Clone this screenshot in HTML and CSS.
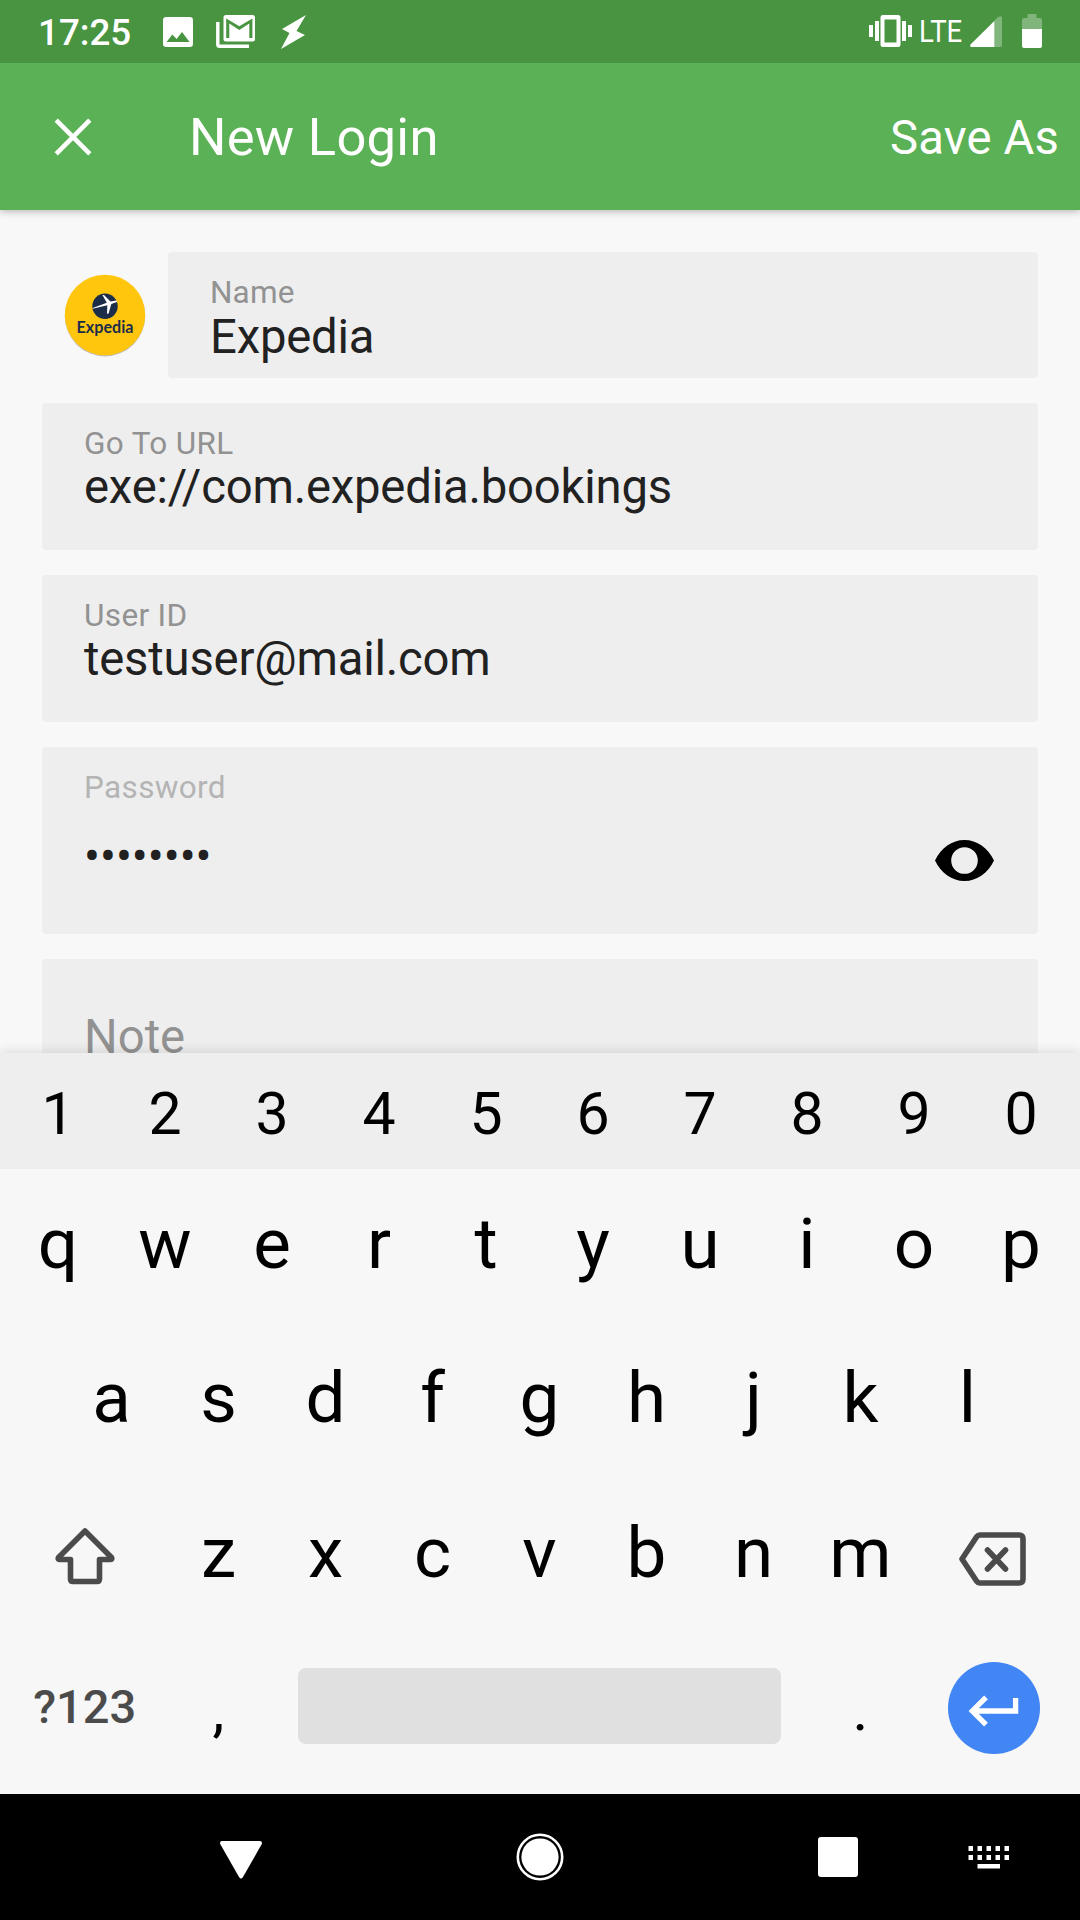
FILE: index.html
```html
<!DOCTYPE html>
<html lang="en">
<head>
<meta charset="utf-8">
<title>New Login</title>
<link rel="stylesheet" href="styles.css">
</head>
<body>
<div class="screen">
  <header class="status">
    <span class="clock">17:25</span>
    <svg class="photo" width="30" height="30" viewBox="0 0 30 30"><path fill="#fff" fill-rule="evenodd" d="M3.300 0H26.700Q30 0 30 3.300V26.700Q30 30 26.700 30H3.300Q0 30 0 26.700V3.300Q0 0 3.300 0ZM9.300 17.500 3.600 25H26.600L19 15 13.600 22Z"/></svg>
    <svg class="gmail" width="39" height="33" viewBox="0 0 39 33"><path fill="#fff" fill-rule="evenodd" d="M10 0H36.500Q39 0 39 2.500V24Q39 26.500 36.500 26.500H10Q7.500 26.500 7.500 24V2.500Q7.500 0 10 0ZM10.200 3.500V23H13.300V8.500L23.300 15 33.300 8.500V23H36.400V3.500L23.300 11.300Z"/><path fill="none" stroke="#fff" stroke-width="3.400" d="M1.800 7V29.500Q1.800 31.300 3.600 31.300H33"/></svg>
    <svg class="bolt" width="25" height="34" viewBox="0 0 25 34"><path fill="#fff" d="M25 0 1 14 8.500 18 0 34 24 20 15.500 16Z"/></svg>
    <svg class="vibrate" width="43" height="32" viewBox="0 0 43 32"><g fill="#fff"><path d="M0 10H4V22H0ZM6 6H10V26H6ZM33 6H37V26H33ZM39 10H43V22H39Z"/><path fill-rule="evenodd" d="M14 0H29Q31.500 0 31.500 2.500V29.500Q31.500 32 29 32H14Q11.500 32 11.500 29.500V2.500Q11.500 0 14 0ZM15.500 4.500V27.500H27.500V4.500Z"/></g></svg>
    <span class="lte"><span class="lte-text">LTE</span></span>
    <svg class="signal" width="32" height="31" viewBox="0 0 32 31"><path fill="#80b57b" d="M24 5 28 1Q32-1 32 2V29Q32 31 30 31H24Z"/><path fill="#fff" d="M24.300 5V31H1.500Q-.500 31 .5 28.500Z"/></svg>
    <svg class="battery" width="20" height="34" viewBox="0 0 20 34"><path fill="#80b57b" d="M5.500 0H14.500V4H18Q20 4 20 6V15H0V6Q0 4 2 4H5.500Z"/><path fill="#fff" d="M0 15H20V32Q20 34 18 34H2Q0 34 0 32Z"/></svg>
  </header>
  <div class="appbar">
    <svg class="close" width="38" height="38" viewBox="0 0 38 38"><path fill="none" stroke="#fff" stroke-width="4.600" d="M2.200 2.200 35.800 35.800M35.800 2.200 2.200 35.800"/></svg>
    <h1 class="title">New Login</h1>
    <span class="save">Save As</span>
  </div>
  <main class="form">
    <div class="name-row">
      <svg class="logo" width="84" height="84" viewBox="0 0 84 84">
        <circle cx="42" cy="43.200" r="40.200" fill="#c3c0b6"/>
        <circle cx="42" cy="42" r="40.200" fill="#ffc60d"/>
        <circle cx="42" cy="33.200" r="12.700" fill="#1c2d49"/>
        <path fill="#fff" d="M29.600 35.800 29.700 35 43.800 29.800 39.400 22 41 22 47.500 28.600 53.200 27.400Q54.600 27.800 53.800 29L48.300 31 45.600 40.500 44 40.800 44.300 32.200Z"/>
        <text class="logo-text" x="13.500" y="60" textLength="57" lengthAdjust="spacingAndGlyphs">Expedia</text>
      </svg>
      <div class="field field-name"><label class="label">Name</label><div class="value">Expedia</div></div>
    </div>
    <div class="field"><label class="label">Go To URL</label><div class="value">exe://com.expedia.bookings</div></div>
    <div class="field"><label class="label">User ID</label><div class="value">testuser@mail.com</div></div>
    <div class="field field-password">
      <div><label class="label label-dim">Password</label><div class="value dots">••••••••</div></div>
      <svg class="eye" width="59" height="42" viewBox="0 0 59 42"><path fill="#000" fill-rule="evenodd" d="M0 20.500C6 8 17 0 29.500 0S53 8 59 20.500C53 33 42 41 29.500 41S6 33 0 20.500ZM29.500 7.200A13.300 13.300 0 1 0 29.500 33.800 13.300 13.300 0 1 0 29.500 7.200Z"/></svg>
    </div>
    <div class="field field-note"><div class="note">Note</div></div>
  </main>
  <section class="keyboard">
    <div class="keys digits"><span>1</span><span>2</span><span>3</span><span>4</span><span>5</span><span>6</span><span>7</span><span>8</span><span>9</span><span>0</span></div>
    <div class="keys"><span>q</span><span>w</span><span>e</span><span>r</span><span>t</span><span>y</span><span>u</span><span>i</span><span>o</span><span>p</span></div>
    <div class="keys keys-home"><span>a</span><span>s</span><span>d</span><span>f</span><span>g</span><span>h</span><span>j</span><span>k</span><span>l</span></div>
    <div class="keys keys-shift">
      <span class="wide"><svg class="shift" width="60" height="58" viewBox="0 0 60 58"><path fill="none" stroke="#4b4b4b" stroke-width="5.600" stroke-linejoin="round" d="M30 4 3.500 30.500Q2.500 32.500 5 32.500H15.500V52Q15.500 54.500 18 54.500H42Q44.500 54.500 44.500 52V32.500H55Q57.500 32.500 56.500 30.500Z"/></svg></span>
      <span>z</span><span>x</span><span>c</span><span>v</span><span>b</span><span>n</span><span>m</span>
      <span class="wide"><svg class="backspace" width="67" height="54" viewBox="0 0 67 54"><g fill="none" stroke="#4b4b4b" stroke-width="5.600" stroke-linejoin="round" stroke-linecap="round"><path d="M21 3H60Q64 3 64 7V47Q64 51 60 51H21Q19 51 17.500 49L3 27 17.500 5Q19 3 21 3Z"/><path d="M28.500 18 46.500 37M46.500 18 28.500 37"/></g></svg></span>
    </div>
    <div class="keys keys-bottom">
      <span class="wide symbols">?123</span>
      <span class="punct">,</span>
      <span class="space"></span>
      <span class="punct">.</span>
      <span class="wide"><svg class="enter" width="92" height="92" viewBox="0 0 92 92"><circle cx="46" cy="46" r="46" fill="#4285f4"/><path fill="none" stroke="#fff" stroke-width="5.300" d="M67.600 36V49H24.500M38 35.300 24.300 49 38 62.700"/></svg></span>
    </div>
  </section>
  <nav class="navbar">
    <svg class="back" width="42" height="38" viewBox="0 0 42 38"><path fill="#fff" d="M2 0H40Q42.500 0 41.800 3L23 36Q21 39 19 36L.2 3Q-.500 0 2 0Z"/></svg>
    <svg class="home" width="48" height="48" viewBox="0 0 48 48"><circle cx="24" cy="24" r="22.200" fill="none" stroke="#fff" stroke-width="2.600"/><circle cx="24" cy="24" r="18.600" fill="#fff"/></svg>
    <svg class="recent" width="40" height="40" viewBox="0 0 40 40"><rect width="40" height="40" rx="3" fill="#fff"/></svg>
    <svg class="ime" width="42" height="24" viewBox="0 0 42 24"><path fill="#fff" d="M.5 1h4.500v5H.5zM9.500 1h4.500v5H9.500zM18.500 1h4.500v5h-4.500zM27.500 1h4.500v5h-4.500zM36.500 1h4.500v5h-4.500zM.5 10h4.500v5H.5zM9.500 10h4.500v5H9.500zM18.500 10h4.500v5h-4.500zM27.500 10h4.500v5h-4.500zM36.500 10h4.500v5h-4.500zM9.500 19h22.500v4.500H9.500z"/></svg>
  </nav>
</div>
</body>
</html>
```
FILE: styles.css
```css
* { box-sizing: border-box; }
body { margin: 0; background: #f8f8f8; font-family: Roboto, "Liberation Sans", sans-serif; }
svg { display: block; flex: none; }
.screen { width: 1080px; height: 1920px; display: flex; flex-direction: column; overflow: hidden; }

.status { flex: none; height: 63px; display: flex; align-items: flex-start; padding-left: 38px; background: #489440; color: #fff; z-index: 2; }
.clock { width: 125px; margin-top: 11px; font-size: 36.750px; line-height: 44px; font-weight: 500; }
.photo { margin-top: 17px; }
.gmail { margin: 15px 0 0 23px; }
.bolt { margin: 15px 0 0 26px; }
.vibrate { margin: 15px 0 0 563px; }
.lte { width: 44px; margin: 12px 0 0 7px; font-size: 32px; line-height: 38px; }
.lte-text { display: inline-block; transform: scaleX(.86); transform-origin: left; }
.signal { margin: 16px 0 0 7px; }
.battery { margin: 14px 0 0 20px; }

.appbar { flex: none; height: 147px; display: flex; align-items: center; padding: 0 21px 0 54px; background: #5bb155; color: #fff; box-shadow: 0 1px 8px rgba(0, 0, 0, .3); z-index: 1; }
.title { flex: 1; margin: 1px 0 0 97px; font-size: 52.500px; line-height: 62px; font-weight: 400; letter-spacing: .27px; }
.save { margin-top: 3px; font-size: 47.250px; line-height: 56px; letter-spacing: .15px; }
.status { position: relative; }

.form { flex: none; height: 843px; display: flex; flex-direction: column; gap: 25px; padding: 42px 42px 0; overflow: hidden; }
.name-row { flex: none; height: 126px; display: flex; align-items: center; padding-left: 21px; }
.logo { margin-right: 21px; }
.logo-text { font: 700 17px Lato, sans-serif; fill: #1c2d49; }
.field { flex: none; height: 147px; padding: 21.500px 42px 0; background: #eee; border-radius: 4px; color: #212121; }
.field-name { flex: 1; height: 126px; }
.label { display: block; font-size: 31.500px; line-height: 37px; letter-spacing: .35px; color: #929292; }
.field-name .label { letter-spacing: .15px; }
.label-dim { color: #b4b4b4; }
.value { font-size: 47.250px; line-height: 51px; letter-spacing: -.2px; }
.field-name .value { line-height: 53px; }
.field-password { height: 187px; display: flex; justify-content: space-between; }
.value.dots { margin-top: 26px; letter-spacing: 0; }
.eye { margin: 71px 2px 0 0; }
.field-note { height: 180px; }
.note { margin-top: 29px; font-size: 47.250px; line-height: 55px; color: #929292; }

.keyboard { flex: none; height: 741px; background: #f7f7f7; color: #000; box-shadow: 0 0 12px rgba(0, 0, 0, .15); z-index: 1; }
.keys { display: flex; height: 154.500px; padding: 0 4.500px; font-size: 71px; line-height: 149px; text-align: center; }
.keys > span { flex: 0 0 107px; }
.keys.digits { height: 116px; background: #eee; font-size: 59px; line-height: 121px; }
.keys-home { padding-left: 58px; line-height: 148px; }
.keys > .wide { flex-basis: 160.500px; display: flex; justify-content: center; }
.shift { margin-top: 49px; }
.backspace { margin: 54px 3px 0 0; }
.keys > .symbols { font-size: 47px; line-height: 147px; font-weight: 500; color: #4b4b4b; }
.keys > .punct { font-size: 60px; line-height: 154px; }
.keys > .space { flex: 0 0 483px; height: 76px; margin: 35px 26px 0; border-radius: 8px; background: #e0e0e0; }
.enter { margin: 29px 1px 0 0; }

.navbar { flex: none; height: 126px; display: flex; align-items: center; padding-left: 220px; background: #000; }
.back { margin-top: 5px; }
.home, .recent { margin-left: 254px; }
.home { margin-top: -1px; }
.ime { margin-left: 110px; }
```
